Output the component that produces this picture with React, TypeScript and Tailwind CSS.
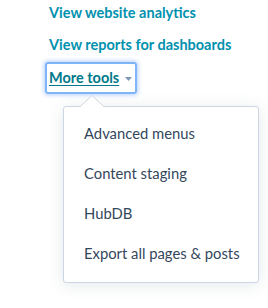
import React from 'react';

const items = ['Advanced menus', 'Content staging', 'HubDB', 'Export all pages & posts'];

export default function App() {
  return (
    <div className="w-[268px] h-[308px] bg-white relative overflow-hidden" style={{ fontFamily: 'Lato, "Noto Sans", sans-serif' }}>
      <div className="flex flex-col items-start pl-[49px] pt-[1px]">
        <a className="text-[14.5px] leading-[24px] font-bold text-[#0091ae] mb-[8px]">View website analytics</a>
        <a className="text-[14.5px] leading-[24px] font-bold text-[#0091ae]">View reports for dashboards</a>
        <div className="-ml-[4px] mt-[5px] flex items-center h-[32px] pl-[2px] pr-[3px] rounded-[3px] border-2 border-[#80b4f8] shadow-[0_0_4px_1px_rgba(90,150,245,0.45)]">
          <span className="text-[14.5px] leading-[20px] font-bold text-[#007a8c] underline underline-offset-2">More tools</span>
          <svg width="7" height="4" viewBox="0 0 7 4" className="ml-[6px] mt-[2px]">
            <path d="M0 0 L7 0 L3.5 4 Z" fill="#7c98b6" />
          </svg>
        </div>
      </div>

      <div className="absolute left-[63px] top-[106px] w-[196px] h-[177px] bg-white border border-[#cbd6e2] rounded-[3px] shadow-[0_2px_16px_rgba(45,62,80,0.12)]">
        <svg width="26" height="13" viewBox="0 0 26 13" className="absolute left-[15px] -top-[12px]">
          <path d="M0 12.5 L13 0.5 L26 12.5" fill="white" stroke="#cbd6e2" strokeWidth="1" />
          <rect x="0" y="12" width="26" height="2" fill="white" />
        </svg>
        <ul className="flex flex-col pt-[6px]">
          {items.map((it) => (
            <li key={it} className="pl-[20px] h-[40px] flex items-center text-[14.8px] text-[#33475b]">
              {it}
            </li>
          ))}
        </ul>
      </div>
    </div>
  );
}
